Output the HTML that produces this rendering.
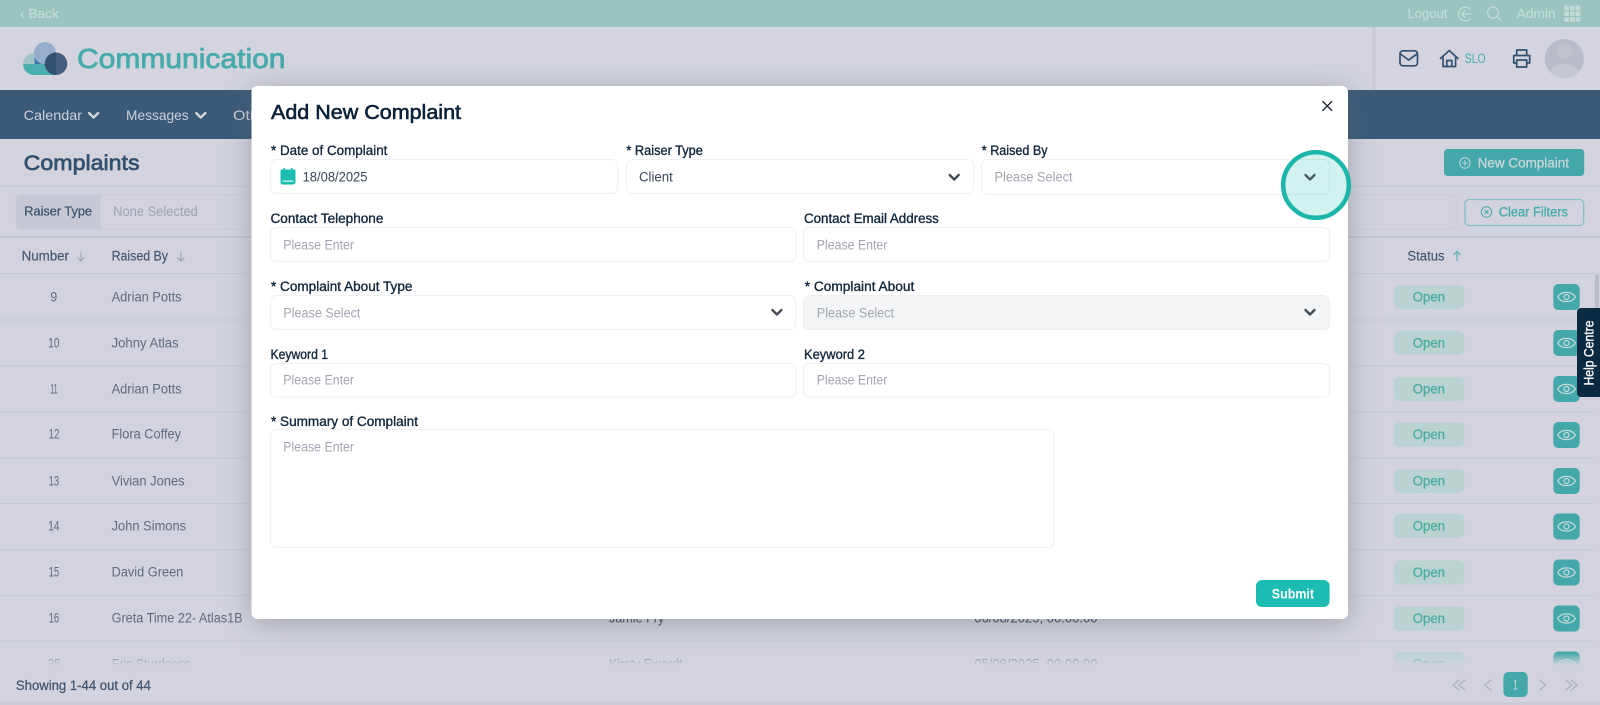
<!DOCTYPE html>
<html lang="en">
<head>
<meta charset="utf-8">
<title>Add New Complaint</title>
<style>
html,body{margin:0;padding:0;width:1600px;height:705px;overflow:hidden;background:#d2d3dc}
svg{display:block;position:absolute;left:0;top:0}
text{font-family:"Liberation Sans",sans-serif;white-space:pre}
.lab{font-size:13.5px;fill:#12273c;stroke:#12273c;stroke-width:.35}
.ph{font-size:13.5px;fill:#a3a6b2}
.row{font-size:13.5px;fill:#5f6b7d}
.open{font-size:13.5px;fill:#4aada0;stroke:#4aada0;stroke-width:.3}
.box{fill:#fff;stroke:#eff0f2;stroke-width:1}
.chev{fill:none;stroke:#3f4a55;stroke-width:2.3;stroke-linecap:round;stroke-linejoin:round}
.ic{fill:none;stroke:#33506f;stroke-width:1.7;stroke-linecap:round;stroke-linejoin:round}
.top{font-size:13px;fill:#c2dbd7;stroke:#c2dbd7;stroke-width:.25}
.line{stroke:#c7c9d3;stroke-width:1}
</style>
</head>
<body>
<svg width="1600" height="705" viewBox="0 0 1600 705" xmlns="http://www.w3.org/2000/svg">
<defs>
<filter id="sh" x="-15%" y="-15%" width="130%" height="130%"><feDropShadow dx="0" dy="4" stdDeviation="14" flood-color="#5a5d70" flood-opacity=".42"/></filter>
<linearGradient id="fade" x1="0" y1="0" x2="0" y2="1"><stop offset="0" stop-color="#d2d3dc" stop-opacity="0"/><stop offset="1" stop-color="#d2d3dc"/></linearGradient>
<clipPath id="tb"><rect x="0" y="237" width="1600" height="428"/></clipPath>
<g id="eye"><rect x="-13.200" y="-13" width="26.400" height="26" rx="5" fill="#44a8aa"/><path d="M-8.800 0C-5.500-6.200 5.500-6.200 8.800 0 5.500 6.200-5.500 6.200-8.800 0Z" fill="none" stroke="#c6dbde" stroke-width="1.300"/><circle r="2.500" fill="none" stroke="#c6dbde" stroke-width="1.200"/></g>
<g id="pill"><rect x="1394" y="-12" width="70.300" height="24" rx="5" fill="#bad3d0"/><text class="open" x="1412.800" y="4.300" textLength="32.200" lengthAdjust="spacingAndGlyphs">Open</text></g>
</defs>

<!-- top bar -->
<rect width="1600" height="27" fill="#9cc4be"/>
<text class="top" x="20" y="18" textLength="38.800" lengthAdjust="spacingAndGlyphs">‹ Back</text>
<text class="top" x="1407.600" y="18" textLength="39.700" lengthAdjust="spacingAndGlyphs">Logout</text>
<g fill="none" stroke="#c2dbd7" stroke-width="1.300" stroke-linecap="round" stroke-linejoin="round">
<path d="M1470.200 9.200A6.800 6.800 0 1 0 1470.200 18.800"/><path d="M1471.200 14H1461.700M1465.200 10.500L1461.700 14 1465.200 17.500"/>
<circle cx="1493" cy="12.500" r="5.500"/><path d="M1497 16.500L1501 20.500"/>
</g>
<text class="top" x="1516.700" y="18" textLength="39" lengthAdjust="spacingAndGlyphs">Admin</text>
<g fill="#c2dbd7"><rect x="1564.300" y="5.700" width="4.600" height="4.600"/><rect x="1570" y="5.700" width="4.600" height="4.600"/><rect x="1575.700" y="5.700" width="4.600" height="4.600"/><rect x="1564.300" y="11.400" width="4.600" height="4.600"/><rect x="1570" y="11.400" width="4.600" height="4.600"/><rect x="1575.700" y="11.400" width="4.600" height="4.600"/><rect x="1564.300" y="17.100" width="4.600" height="4.600"/><rect x="1570" y="17.100" width="4.600" height="4.600"/><rect x="1575.700" y="17.100" width="4.600" height="4.600"/></g>

<!-- header -->
<rect y="27" width="1600" height="63" fill="#d3d4dd"/>
<rect x="1372.500" y="27" width="3" height="63" fill="#c9cad4"/>
<path d="M23 64A11 11 0 0 1 45 64H34Z" fill="#9fc4c8"/>
<path d="M29 64H56V75H34A11 11 0 0 1 23 64Z" fill="#4aadae"/>
<circle cx="45" cy="53" r="11" fill="#96aecb"/>
<path d="M34.500 56.500A11 11 0 0 0 55.500 56.500 11 11 0 0 0 45 64H34.800Z" fill="#3f74a6"/>
<path d="M56 52.500A11.200 11.200 0 0 0 56 75Z" fill="#33506f"/>
<path d="M56 52.500A11.200 11.200 0 0 1 56 75Z" fill="#45607f"/>
<text x="77" y="68" font-size="28" fill="#46abaa" stroke="#46abaa" stroke-width=".8" textLength="208.500" lengthAdjust="spacingAndGlyphs">Communication</text>
<rect class="ic" x="1400" y="50.800" width="17.500" height="15" rx="3"/><path class="ic" d="M1400.500 54L1408.700 60 1417 54"/>
<path class="ic" d="M1440.500 58.500L1449.300 50.500 1458 58.500M1443 56.500V66.500H1455.600V56.500M1446.800 66.500V60.500H1451.800V66.500"/>
<text x="1464.700" y="63" font-size="13.500" fill="#46abaa" textLength="21" lengthAdjust="spacingAndGlyphs">SLO</text>
<path class="ic" d="M1516.700 55V50H1526.700V55M1516.700 63H1513.700V55.500H1529.700V63H1526.700M1516.700 60H1526.700V67H1516.700Z"/>
<circle cx="1564.300" cy="58.500" r="19.500" fill="#b9bbc6"/>
<circle cx="1564.300" cy="51.500" r="8" fill="#c0c2cc"/>
<path d="M1550.300 71.500C1553.300 61.500 1575.300 61.500 1578.300 71.500A19.500 19.500 0 0 1 1550.300 71.500Z" fill="#c6c8d1"/>

<!-- nav -->
<rect y="90" width="1600" height="49" fill="#3b5a78"/>
<text x="23.700" y="120" font-size="14" fill="#c9d0db" textLength="58.300" lengthAdjust="spacingAndGlyphs">Calendar</text>
<path d="M89 113L93.600 117.500 98.200 113" fill="none" stroke="#d2d8e1" stroke-width="2.300" stroke-linecap="round" stroke-linejoin="round"/>
<text x="126" y="120" font-size="14" fill="#c9d0db" textLength="62.600" lengthAdjust="spacingAndGlyphs">Messages</text>
<path d="M196.200 113L200.800 117.500 205.400 113" fill="none" stroke="#d2d8e1" stroke-width="2.300" stroke-linecap="round" stroke-linejoin="round"/>
<text x="233" y="120" font-size="14" fill="#c9d0db" textLength="40" lengthAdjust="spacingAndGlyphs">Other</text>

<!-- page title -->
<text x="23.700" y="170" font-size="21.500" fill="#33506f" stroke="#33506f" stroke-width=".7" textLength="115.900" lengthAdjust="spacingAndGlyphs">Complaints</text>
<rect x="1444" y="149" width="140.200" height="27" rx="4" fill="#44a8aa"/>
<circle cx="1464.900" cy="163" r="5.200" fill="none" stroke="#c9d6dc" stroke-width="1"/><path d="M1464.900 160V166M1461.900 163H1467.900" stroke="#c9d6dc" stroke-width="1"/>
<text x="1477.700" y="167.500" font-size="13.500" fill="#c9d6dc" stroke="#c9d6dc" stroke-width=".3" textLength="91.300" lengthAdjust="spacingAndGlyphs">New Complaint</text>
<rect y="186" width="1600" height="1" fill="#c7c9d3"/>

<!-- filters -->
<rect x="16.200" y="195" width="1440" height="34" rx="4" fill="#d2d3dc" stroke="#c9cbd5"/>
<path d="M20.200 195H100.700V229H20.200A4 4 0 0 1 16.200 225V199A4 4 0 0 1 20.200 195Z" fill="#c6c9d4"/>
<text x="24.300" y="215.500" font-size="13" fill="#43556e" stroke="#43556e" stroke-width=".3" textLength="67.700" lengthAdjust="spacingAndGlyphs">Raiser Type</text>
<text x="113.200" y="216" font-size="13.500" fill="#9fa2ae" textLength="84.600" lengthAdjust="spacingAndGlyphs">None Selected</text>
<rect x="1465" y="199.500" width="118.700" height="26" rx="4" fill="none" stroke="#83c0c1" stroke-width="1.300"/>
<circle cx="1486.500" cy="212" r="5.200" fill="none" stroke="#46abaa" stroke-width="1"/><path d="M1484.500 210L1488.500 214M1488.500 210L1484.500 214" stroke="#46abaa" stroke-width="1"/>
<text x="1498.700" y="216.500" font-size="13.500" fill="#46abaa" stroke="#46abaa" stroke-width=".3" textLength="69.300" lengthAdjust="spacingAndGlyphs">Clear Filters</text>
<rect y="236" width="1600" height="2" fill="#c4c6d0"/>

<!-- table -->
<g clip-path="url(#tb)">
<text x="21.600" y="260.300" font-size="13.500" fill="#43556e" stroke="#43556e" stroke-width=".15" textLength="47.400" lengthAdjust="spacingAndGlyphs">Number</text>
<path d="M81 251.500V261M77.500 257.500L81 261 84.500 257.500" fill="none" stroke="#9ba0ae" stroke-width="1"/>
<text x="111.600" y="260.300" font-size="13.500" fill="#43556e" stroke="#43556e" stroke-width=".15" textLength="56.400" lengthAdjust="spacingAndGlyphs">Raised By</text>
<path d="M180.900 251.500V261M177.400 257.500L180.900 261 184.400 257.500" fill="none" stroke="#9ba0ae" stroke-width="1"/>
<text x="1407.400" y="260.300" font-size="13.500" fill="#43556e" stroke="#43556e" stroke-width=".15" textLength="37.200" lengthAdjust="spacingAndGlyphs">Status</text>
<path d="M1457 261V251.500M1453.500 255L1457 251.500 1460.500 255" fill="none" stroke="#46abaa" stroke-width="1"/>

<path class="line" d="M0 273.500H1595M0 320H1595M0 366H1595M0 412H1595M0 458H1595M0 503.500H1595M0 549.500H1595M0 595.500H1595M0 641H1595"/>

<text class="row" x="50.300" y="301.300" textLength="7" lengthAdjust="spacingAndGlyphs">9</text>
<text class="row" x="48.300" y="347.300" textLength="11.200" lengthAdjust="spacingAndGlyphs">10</text>
<text class="row" x="50.200" y="393.300" textLength="7.500" lengthAdjust="spacingAndGlyphs">11</text>
<text class="row" x="48.800" y="438.300" textLength="10.700" lengthAdjust="spacingAndGlyphs">12</text>
<text class="row" x="48.600" y="485.300" textLength="10.600" lengthAdjust="spacingAndGlyphs">13</text>
<text class="row" x="48.300" y="530.300" textLength="11.200" lengthAdjust="spacingAndGlyphs">14</text>
<text class="row" x="48.600" y="576.300" textLength="10.600" lengthAdjust="spacingAndGlyphs">15</text>
<text class="row" x="48.600" y="622.300" textLength="10.600" lengthAdjust="spacingAndGlyphs">16</text>
<text class="row" x="47.800" y="668.500" textLength="13" lengthAdjust="spacingAndGlyphs">35</text>

<text class="row" x="111.600" y="301.300" textLength="70" lengthAdjust="spacingAndGlyphs">Adrian Potts</text>
<text class="row" x="111.600" y="347.300" textLength="67" lengthAdjust="spacingAndGlyphs">Johny Atlas</text>
<text class="row" x="111.600" y="393.300" textLength="70" lengthAdjust="spacingAndGlyphs">Adrian Potts</text>
<text class="row" x="111.600" y="438.300" textLength="69.400" lengthAdjust="spacingAndGlyphs">Flora Coffey</text>
<text class="row" x="111.600" y="485.300" textLength="73" lengthAdjust="spacingAndGlyphs">Vivian Jones</text>
<text class="row" x="111.600" y="530.300" textLength="74.500" lengthAdjust="spacingAndGlyphs">John Simons</text>
<text class="row" x="111.600" y="576.300" textLength="71.700" lengthAdjust="spacingAndGlyphs">David Green</text>
<text class="row" x="111.600" y="622.300" textLength="131" lengthAdjust="spacingAndGlyphs">Greta Time 22- Atlas1B</text>
<text class="row" x="111.600" y="668.500" textLength="78.400" lengthAdjust="spacingAndGlyphs">Erin Sturdgess</text>

<text x="609" y="622.700" font-size="13.500" fill="#3f4a5c" textLength="55.300" lengthAdjust="spacingAndGlyphs">Jamie Fry</text>
<text x="974.300" y="622.700" font-size="13.500" fill="#3f4a5c" textLength="123.200" lengthAdjust="spacingAndGlyphs">06/08/2025, 00:00:00</text>
<text class="row" x="609" y="668.500" textLength="73.500" lengthAdjust="spacingAndGlyphs">Kirsty Ewardt</text>
<text class="row" x="974.300" y="668.500" textLength="123.200" lengthAdjust="spacingAndGlyphs">05/08/2025, 00:00:00</text>

<use href="#pill" y="297"/><use href="#pill" y="343"/><use href="#pill" y="389"/><use href="#pill" y="434.500"/><use href="#pill" y="481"/><use href="#pill" y="526"/><use href="#pill" y="572.500"/><use href="#pill" y="618.500"/><use href="#pill" y="664"/>
<use href="#eye" x="1566.500" y="297"/><use href="#eye" x="1566.500" y="343"/><use href="#eye" x="1566.500" y="389"/><use href="#eye" x="1566.500" y="435"/><use href="#eye" x="1566.500" y="481"/><use href="#eye" x="1566.500" y="526.500"/><use href="#eye" x="1566.500" y="572.500"/><use href="#eye" x="1566.500" y="618.500"/><use href="#eye" x="1566.500" y="664.500"/>
<rect x="1595" y="274" width="4" height="90" rx="2" fill="#b9bbc6"/>
<rect y="653" width="1600" height="12" fill="url(#fade)"/>
</g>

<!-- footer -->
<rect y="665" width="1600" height="40" fill="#d2d3dc"/>
<rect y="702" width="1600" height="3" fill="#cbccd6"/>
<text x="15.900" y="690" font-size="13.500" fill="#43556e" stroke="#43556e" stroke-width=".25" textLength="135" lengthAdjust="spacingAndGlyphs">Showing 1-44 out of 44</text>
<g fill="none" stroke="#aeb0bd" stroke-width="1.300" stroke-linecap="round" stroke-linejoin="round">
<path d="M1459 680L1453 685 1459 690M1465 680L1459 685 1465 690"/>
<path d="M1490.800 680L1484.800 685 1490.800 690"/>
<path d="M1539.600 680L1545.600 685 1539.600 690"/>
<path d="M1565.800 680L1571.800 685 1565.800 690M1571.300 680L1577.300 685 1571.300 690"/>
</g>
<rect x="1503.400" y="672" width="24.300" height="25" rx="5" fill="#44a8aa"/>
<text x="1513" y="689.500" font-size="13.500" fill="#c9dde0" textLength="5" lengthAdjust="spacingAndGlyphs">1</text>

<!-- help centre -->
<path d="M1581 308H1600V397H1581A4 4 0 0 1 1577 393V312A4 4 0 0 1 1581 308Z" fill="#0b2a42"/>
<text transform="translate(1593.500 385.500) rotate(-90)" font-size="13.500" fill="#fff" stroke="#fff" stroke-width=".3" textLength="65" lengthAdjust="spacingAndGlyphs">Help Centre</text>

<!-- modal -->
<rect x="251.500" y="86" width="1096.500" height="533" rx="6" fill="#fff" filter="url(#sh)"/>
<text x="271" y="119" font-size="20.500" fill="#0b2239" stroke="#0b2239" stroke-width=".6" textLength="190" lengthAdjust="spacingAndGlyphs">Add New Complaint</text>
<path d="M1322.800 101.500L1331.800 110.500M1331.800 101.500L1322.800 110.500" stroke="#1d2733" stroke-width="1.300" stroke-linecap="round"/>

<text class="lab" x="271" y="155.200" textLength="116.400" lengthAdjust="spacingAndGlyphs">* Date of Complaint</text>
<rect class="box" x="270.500" y="159.500" width="347.300" height="34" rx="6"/>
<path d="M281.500 169.500H294C295 169.500 295.500 170 295.500 171V182C295.500 183.500 294.500 184.500 293 184.500H282.500C281 184.500 280.500 183.500 280.500 182V171C280.500 170 281 169.500 281.500 169.500Z" fill="#1cbcb2"/>
<rect x="283.500" y="168" width="1.600" height="3.500" fill="#1cbcb2"/><rect x="290.800" y="168" width="1.600" height="3.500" fill="#1cbcb2"/>
<rect x="282.500" y="180.500" width="11" height="1.300" fill="#d0f0ee"/>
<text x="302.600" y="181.500" font-size="13.500" fill="#3a4656" textLength="64.900" lengthAdjust="spacingAndGlyphs">18/08/2025</text>

<text class="lab" x="626.400" y="155.200" textLength="76.500" lengthAdjust="spacingAndGlyphs">* Raiser Type</text>
<rect class="box" x="626.500" y="159.500" width="347.500" height="34" rx="6"/>
<text x="639" y="181.500" font-size="13.500" fill="#3a4656" textLength="33.800" lengthAdjust="spacingAndGlyphs">Client</text>
<path class="chev" d="M949.700 175L954.200 179.500 958.700 175"/>

<text class="lab" x="981.800" y="155.200" textLength="65.800" lengthAdjust="spacingAndGlyphs">* Raised By</text>
<rect class="box" x="981.500" y="159.500" width="348" height="35" rx="6"/>
<text class="ph" x="994.500" y="181.500" textLength="78" lengthAdjust="spacingAndGlyphs">Please Select</text>

<text class="lab" x="270.500" y="223.200" textLength="112.900" lengthAdjust="spacingAndGlyphs">Contact Telephone</text>
<rect class="box" x="270.500" y="227.500" width="525.300" height="34" rx="6"/>
<text class="ph" x="283.300" y="249.300" textLength="70.700" lengthAdjust="spacingAndGlyphs">Please Enter</text>
<text class="lab" x="804" y="223.200" textLength="134.800" lengthAdjust="spacingAndGlyphs">Contact Email Address</text>
<rect class="box" x="803.500" y="227.500" width="526" height="34" rx="6"/>
<text class="ph" x="816.800" y="249.300" textLength="70.600" lengthAdjust="spacingAndGlyphs">Please Enter</text>

<text class="lab" x="271" y="291.200" textLength="141.400" lengthAdjust="spacingAndGlyphs">* Complaint About Type</text>
<rect class="box" x="270.500" y="295.500" width="525.300" height="34" rx="6"/>
<text class="ph" x="283.300" y="317.300" textLength="77.100" lengthAdjust="spacingAndGlyphs">Please Select</text>
<path class="chev" d="M772.400 310L776.900 314.500 781.400 310"/>
<text class="lab" x="804.800" y="291.200" textLength="109.500" lengthAdjust="spacingAndGlyphs">* Complaint About</text>
<rect x="803.500" y="295.500" width="526" height="34" rx="6" fill="#f3f4f6" stroke="#eceef0"/>
<text class="ph" x="816.800" y="317.300" textLength="77.200" lengthAdjust="spacingAndGlyphs">Please Select</text>
<path class="chev" d="M1305.500 310L1310 314.500 1314.500 310"/>

<text class="lab" x="270.500" y="359.200" textLength="57.500" lengthAdjust="spacingAndGlyphs">Keyword 1</text>
<rect class="box" x="270.500" y="363.500" width="525.300" height="33.500" rx="6"/>
<text class="ph" x="283.300" y="384.300" textLength="70.700" lengthAdjust="spacingAndGlyphs">Please Enter</text>
<text class="lab" x="804" y="359.200" textLength="61" lengthAdjust="spacingAndGlyphs">Keyword 2</text>
<rect class="box" x="803.500" y="363.500" width="526" height="33.500" rx="6"/>
<text class="ph" x="816.800" y="384.300" textLength="70.600" lengthAdjust="spacingAndGlyphs">Please Enter</text>

<text class="lab" x="271" y="426.200" textLength="147" lengthAdjust="spacingAndGlyphs">* Summary of Complaint</text>
<rect class="box" x="270.500" y="429.500" width="783.500" height="118" rx="6"/>
<text class="ph" x="283.300" y="451.300" textLength="70.700" lengthAdjust="spacingAndGlyphs">Please Enter</text>

<rect x="1256" y="580" width="73.600" height="27" rx="6" fill="#1cbcb2"/>
<text x="1271.800" y="598.500" font-size="13.500" font-weight="700" fill="#fff" textLength="42.200" lengthAdjust="spacingAndGlyphs">Submit</text>

<!-- highlight -->
<circle cx="1316" cy="185" r="32.800" fill="#1cbcb2" fill-opacity=".2" stroke="#1cb5aa" stroke-width="4.500"/>
<path d="M1305.500 175L1310 179.500 1314.500 175" fill="none" stroke="#4a5a62" stroke-width="2.300" stroke-linecap="round" stroke-linejoin="round"/>
</svg>
</body>
</html>
